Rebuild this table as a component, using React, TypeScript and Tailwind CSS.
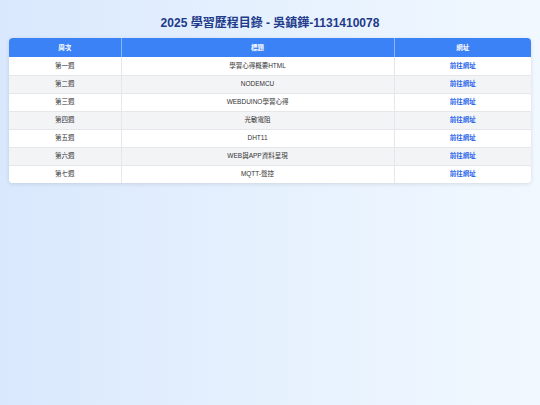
import React from 'react';

const weeks = [
  { week: '第一週', title: '學習心得概要HTML' },
  { week: '第二週', title: 'NODEMCU' },
  { week: '第三週', title: 'WEBDUINO學習心得' },
  { week: '第四週', title: '光敏電阻' },
  { week: '第五週', title: 'DHT11' },
  { week: '第六週', title: 'WEB與APP資料呈現' },
  { week: '第七週', title: 'MQTT-聲控' },
];

export default function App() {
  return (
    <div
      className="min-h-[405px] w-full bg-gradient-to-r from-[#d9e8fd] via-[#e6f1fe] to-[#f1f8ff] px-[9px] pt-[14px]"
      style={{ fontFamily: '"Liberation Sans", "Noto Sans CJK TC", sans-serif' }}
    >
      <h1 className="text-center text-[12px] font-bold leading-[18px] text-[#1e3a8a]">
        2025 學習歷程目錄 - 吳鎮鏵-1131410078
      </h1>

      <div className="mt-[6px] overflow-hidden rounded-[4px] bg-white shadow-[0_1px_4px_rgba(0,0,0,0.12)]">
        <table className="w-full border-collapse text-[6.5px]">
          <thead>
            <tr className="h-[19px] bg-[#3b82f6] text-white">
              <th className="w-[112px] border-r border-[#8db6fa] font-bold">周次</th>
              <th className="w-[273px] border-r border-[#8db6fa] font-bold">標題</th>
              <th className="font-bold">網址</th>
            </tr>
          </thead>
          <tbody>
            {weeks.map((row, i) => (
              <tr
                key={row.week}
                className={`h-[18px] border-b border-[#e5e7eb] last:border-b-0 ${i % 2 === 1 ? 'bg-[#f3f4f6]' : 'bg-white'}`}
              >
                <td className="border-r border-[#e5e7eb] text-center text-[#333]">{row.week}</td>
                <td className="border-r border-[#e5e7eb] text-center text-[#333]">{row.title}</td>
                <td className="text-center">
                  <a href="#" className="font-bold text-[#2563eb]">前往網址</a>
                </td>
              </tr>
            ))}
          </tbody>
        </table>
      </div>
    </div>
  );
}
